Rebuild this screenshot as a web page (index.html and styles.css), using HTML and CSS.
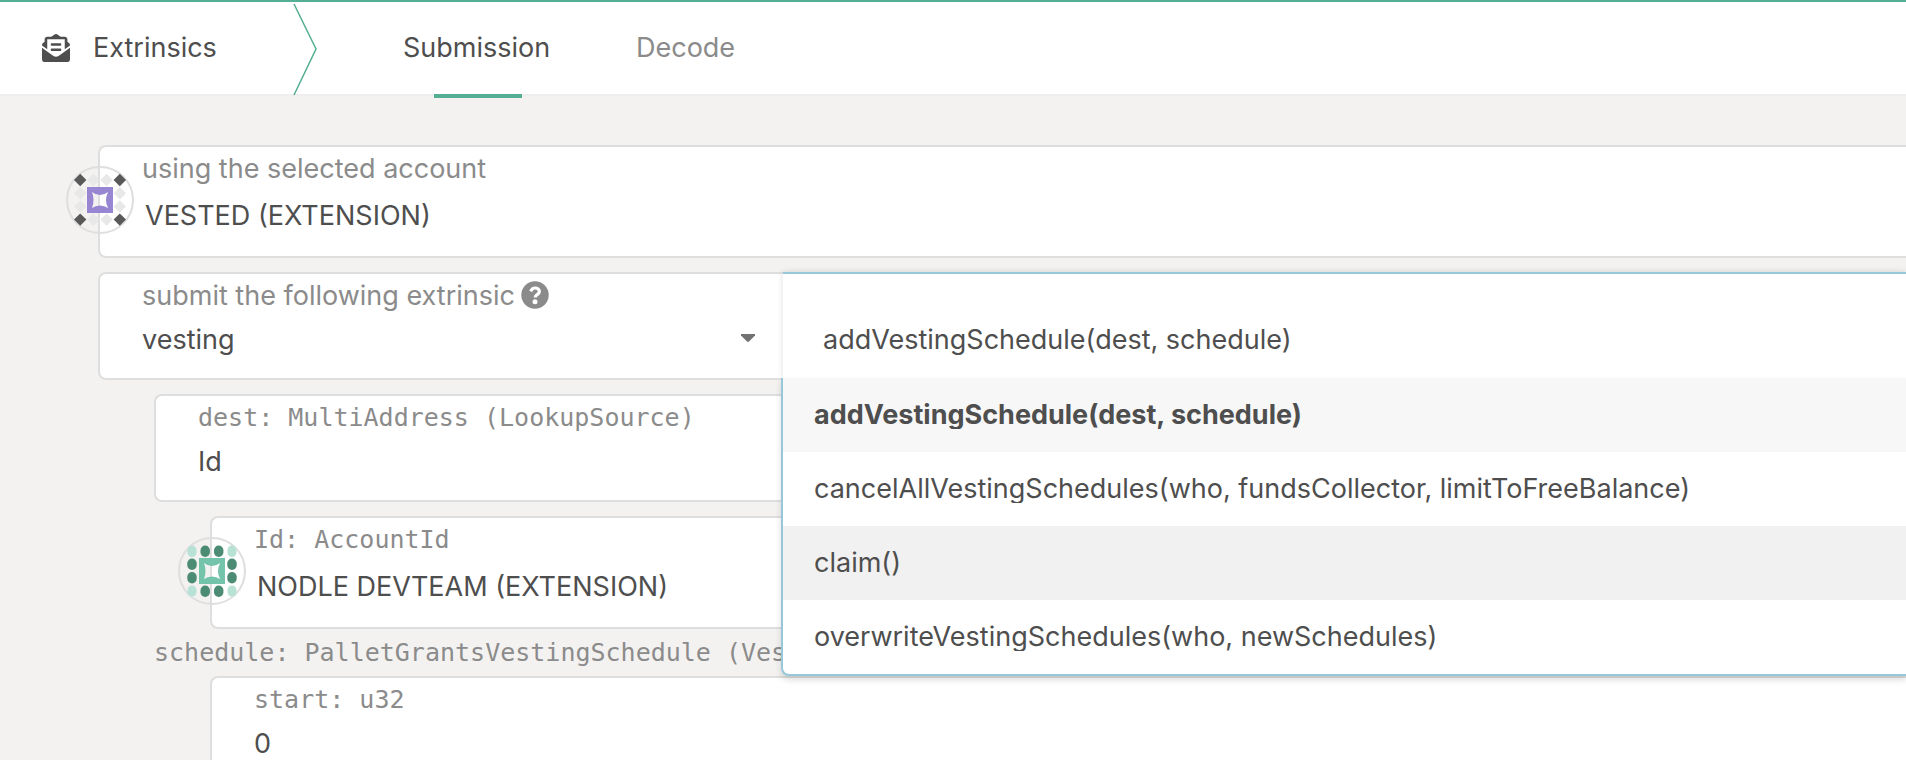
FILE: index.html
```html
<!DOCTYPE html>
<html lang="en">
<head>
<meta charset="utf-8">
<title>Extrinsics</title>
<link rel="stylesheet" href="styles.css">
</head>
<body>
<header class="topbar">
  <div class="section">
    <svg class="section-icon" viewBox="0 0 512 512"><path fill="currentColor" d="M176 216h160c8.8 0 16-7.200 16-16v-16c0-8.800-7.200-16-16-16H176c-8.800 0-16 7.200-16 16v16c0 8.800 7.200 16 16 16zm-16 80c0 8.800 7.200 16 16 16h160c8.800 0 16-7.200 16-16v-16c0-8.800-7.200-16-16-16H176c-8.800 0-16 7.200-16 16v16zm96 121.100c-16.400 0-32.800-5.100-46.900-15.200L0 250.900V464c0 26.500 21.500 48 48 48h416c26.500 0 48-21.500 48-48V250.900L302.900 401.900c-14 10.100-30.500 15.200-46.900 15.200zm237.600-254.200c-8.900-6.900-17.200-13.500-29.600-22.800V96c0-26.500-21.500-48-48-48h-77.600c-3-2.200-5.900-4.300-9-6.600C312.600 29.200 279.200-.3 256 0c-23.200-.3-56.600 29.200-73.400 41.400-3.200 2.300-6 4.400-9 6.600H96c-26.500 0-48 21.500-48 48v44.100c-12.400 9.300-20.700 15.800-29.600 22.800A48 48 0 0 0 0 200.700v10.700l96 69.400V96h320v184.700l96-69.400v-10.700c0-14.700-6.800-28.700-18.400-37.700z"/></svg>
    <span class="section-name">Extrinsics</span>
  </div>
  <svg class="chevron" viewBox="0 0 24 92"><path d="M1 2 L23 47 L1 93" fill="none" stroke="#54ae93" stroke-width="1.500"/></svg>
  <nav class="tabs">
    <a class="tab active">Submission</a>
    <a class="tab">Decode</a>
  </nav>
</header>
<main class="content">
  <section class="field account">
    <svg class="identicon" viewBox="0 0 68 68">
      <circle cx="34" cy="34" r="33" fill="none" stroke="#dedede" stroke-width="2"/>
      <g fill="#e8e8e8"><path d="M27.400 7.800l6.200 6.200-6.200 6.200-6.200-6.200zM40.600 7.800l6.200 6.200-6.200 6.200-6.200-6.200zM27.400 47.400l6.200 6.200-6.200 6.200-6.200-6.200zM40.600 47.400l6.200 6.200-6.200 6.200-6.200-6.200zM14.200 21l6.200 6.200-6.200 6.200L8 27.200zM14.200 34.200l6.200 6.200-6.200 6.200L8 40.400zM53.800 21l6.200 6.200-6.200 6.200-6.200-6.200zM53.800 34.200l6.200 6.200-6.200 6.200-6.200-6.200z"/></g>
      <path fill="#595959" d="M14.200 7.800l6.200 6.200-6.200 6.200L8 14zM53.800 7.800L60 14l-6.200 6.200-6.200-6.200zM14.200 47.400l6.200 6.200-6.200 6.200L8 53.600zM53.800 47.400l6.200 6.200-6.200 6.200-6.200-6.200z"/>
      <path fill="#9886d2" fill-rule="evenodd" d="M21 21h26v26H21zM26 26q3 8 0 16q3.500-2.500 8-2.500t8 2.500q-4-8 0-16q-3.500 3-8 3t-8-3z"/>
    </svg>
    <div class="label l-using">using the selected account</div>
    <div class="value v-vested">VESTED (EXTENSION)</div>
  </section>

  <section class="field extrinsic">
    <div class="pallet">
      <div class="label"><span class="l-submit">submit the following extrinsic</span>
        <svg class="help" viewBox="0 0 28 28"><circle cx="14" cy="14" r="13.700" fill="#8b8b8b"/><path d="M9.700 10.300C10.600 8 12 7 14.100 7c2.500 0 4.300 1.400 4.300 3.500 0 3.100-4.200 3-4.200 5.900" fill="none" stroke="#fff" stroke-width="3.200"/><circle cx="14" cy="20.800" r="2.500" fill="#fff"/></svg>
      </div>
      <div class="value-row"><span class="value v-vesting">vesting</span>
        <svg class="caret" viewBox="0 0 14 8"><path d="M0 0h14v1.500L8 7.500Q7 8.300 6 7.500L0 1.500z" fill="#727272"/></svg>
      </div>
    </div>
    <div class="dropdown">
      <div class="current">addVestingSchedule(dest, schedule)</div>
      <ul class="menu">
        <li class="item selected"><span class="item-text">addVestingSchedule(dest, schedule)</span></li>
        <li class="item"><span class="item-text i-cancel">cancelAllVestingSchedules(who, fundsCollector, limitToFreeBalance)</span></li>
        <li class="item hover"><span class="item-text">claim()</span></li>
        <li class="item"><span class="item-text">overwriteVestingSchedules(who, newSchedules)</span></li>
      </ul>
    </div>
  </section>

  <div class="params">
    <section class="field">
      <div class="label mono">dest: MultiAddress (LookupSource)</div>
      <div class="value v-id">Id</div>
    </section>
    <div class="nested">
      <section class="field account">
        <svg class="identicon" viewBox="0 0 68 68">
          <circle cx="34" cy="34" r="33" fill="none" stroke="#dedede" stroke-width="2"/>
          <g fill="#b7e2d5"><rect x="9.500" y="8.500" width="9" height="11.500" rx="4.500"/><rect x="49.500" y="8.500" width="9" height="11.500" rx="4.500"/><rect x="9.500" y="48.500" width="9" height="11" rx="4.500"/><rect x="49.500" y="48.500" width="9" height="11" rx="4.500"/></g>
          <g fill="#4c8b74"><rect x="22.500" y="8.500" width="9.400" height="11.500" rx="4.700"/><rect x="36" y="8.500" width="9.400" height="11.500" rx="4.700"/><rect x="22.500" y="48.500" width="9.400" height="11.500" rx="4.700"/><rect x="36" y="48.500" width="9.400" height="11.500" rx="4.700"/><rect x="9.300" y="21.500" width="9.400" height="11.500" rx="4.700"/><rect x="9.300" y="35" width="9.400" height="11.500" rx="4.700"/><rect x="49.300" y="21.500" width="9.400" height="11.500" rx="4.700"/><rect x="49.300" y="35" width="9.400" height="11.500" rx="4.700"/></g>
          <path fill="#74c3ab" fill-rule="evenodd" d="M21 21h26v26H21zM26 26q3 8 0 16q3.500-2.500 8-2.500t8 2.500q-4-8 0-16q-3.500 3-8 3t-8-3z"/>
        </svg>
        <div class="label mono">Id: AccountId</div>
        <div class="value v-nodle">NODLE DEVTEAM (EXTENSION)</div>
      </section>
    </div>
    <div class="group-label mono">schedule: PalletGrantsVestingSchedule (VestingScheduleOf)</div>
    <div class="nested start">
      <section class="field">
        <div class="label mono">start: u32</div>
        <div class="value">0</div>
      </section>
    </div>
  </div>
</main>
</body>
</html>
```

FILE: styles.css
```css
* { box-sizing: border-box; }
html, body { height: 100%; }
body {
  margin: 0;
  overflow: hidden;
  background: #f3f2f0;
  color: #4e4e4e;
  font-family: Inter, "Liberation Sans", sans-serif;
  font-size: 27px;
  line-height: 40px;
}
.topbar {
  display: flex;
  height: 96px;
  background: #fff;
  border-top: 2px solid #54ae93;
  border-bottom: 2px solid #eeeeee;
}
.section { display: flex; align-items: center; width: 293px; padding-left: 42px; }
.section-icon { width: 28px; height: 28px; margin-right: 23px; }
.chevron { width: 24px; height: 92px; overflow: visible; }
.tabs { display: flex; margin-left: 44px; }
.tab {
  position: relative;
  width: 233px;
  padding: 26px 42px 0;
  color: #8b8b8b;
}
.tab.active { color: #4e4e4e; }
.tab.active::after {
  content: "";
  position: absolute;
  left: 73px;
  top: 92px;
  width: 88px;
  height: 4px;
  background: #54ae93;
}
.content { padding: 49px 0 0 98px; }
.field {
  position: relative;
  height: 108px;
  margin-bottom: 14px;
  padding: 2px 0 0 42px;
  background: #fff;
  border: 2px solid #dedede;
  border-right: 0;
  border-radius: 8px 0 0 8px;
}
.account { height: 113px; }
.account .value { margin: 7px 0 0 3px; }
.identicon { position: absolute; left: -34px; top: 19px; width: 68px; height: 68px; }
.label { display: flex; align-items: center; color: #8b8b8b; white-space: nowrap; }
.help { width: 28px; height: 28px; margin: -2px 0 0 6px; }
.value { margin-top: 4px; white-space: nowrap; }
.pallet { width: 641px; }
.value-row { display: flex; justify-content: space-between; align-items: center; }
.caret { width: 14px; height: 8px; margin-right: 28px; }
.mono { font-family: "DejaVu Sans Mono", "Liberation Mono", monospace; font-size: 25px; color: #8b8b8b; }
.dropdown {
  position: absolute;
  z-index: 2;
  left: 681px;
  top: -2px;
  right: 0;
}
.current {
  height: 106px;
  margin-left: 2px;
  padding: 46px 0 0 40px;
  background: #fff;
  border-top: 2px solid #96c8da;
  box-shadow: 0 0 6px rgba(34, 36, 38, .15);
}
.menu {
  position: relative;
  margin: 0;
  padding: 0;
  list-style: none;
  background: #fff;
  border: solid #96c8da;
  border-width: 0 0 2px 2px;
  border-radius: 0 0 0 8px;
  box-shadow: 0 4px 6px rgba(34, 36, 38, .15);
  overflow: hidden;
}
.item { display: flex; height: 74px; padding: 23px 0 0 31px; white-space: nowrap; }
.item-text { height: 28px; line-height: 28px; overflow: hidden; }
.selected { background: #f7f7f7; font-weight: 700; }
.hover { background: #f1f1f1; }
.params { padding-left: 56px; }
.nested { padding-left: 56px; }
.nested .field { margin-bottom: 0; }
.group-label { height: 47px; line-height: 48px; white-space: nowrap; }
```
